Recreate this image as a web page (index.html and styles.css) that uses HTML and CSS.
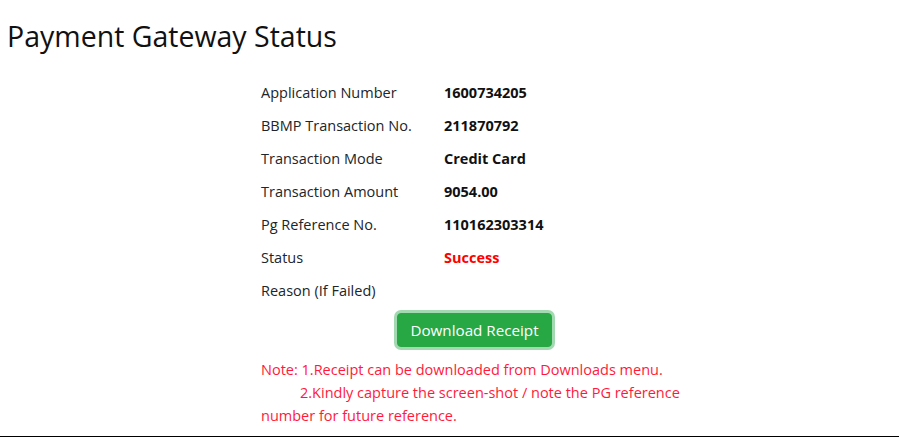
FILE: index.html
```html
<!DOCTYPE html>
<html>
<head>
<meta charset="utf-8">
<link rel="stylesheet" href="styles.css">
</head>
<body>
<div class="page">
  <h1 class="title">Payment Gateway Status</h1>
  <div class="panel">
    <div class="details">
      <div class="label">Application Number</div><div class="value">1600734205</div>
      <div class="label">BBMP Transaction No.</div><div class="value">211870792</div>
      <div class="label">Transaction Mode</div><div class="value">Credit Card</div>
      <div class="label">Transaction Amount</div><div class="value">9054.00</div>
      <div class="label">Pg Reference No.</div><div class="value">110162303314</div>
      <div class="label">Status</div><div class="value success">Success</div>
      <div class="label">Reason (If Failed)</div><div class="value"></div>
    </div>
    <div class="actions">
      <button class="btn-download">Download Receipt</button>
    </div>
    <p class="note">Note: 1.Receipt can be downloaded from Downloads menu.<br><span class="indent"></span>2.Kindly capture the screen-shot / note the PG reference number for future reference.</p>
  </div>
</div>
</body>
</html>
```
FILE: styles.css
```css
html, body {
  margin: 0;
  padding: 0;
  background: #fff;
}
body {
  font-family: "Open Sans", "Liberation Sans", sans-serif;
  color: #212529;
  font-size: 14.5px;
}
.page {
  width: 899px;
  height: 437px;
  box-sizing: border-box;
  border-bottom: 1px solid #000;
  overflow: hidden;
}
.title {
  margin: 0;
  padding: 19px 0 0 7px;
  font-size: 28.5px;
  font-weight: 400;
  line-height: 34px;
  color: #111;
}
.panel {
  margin: 23px 0 0 261px;
  width: 440px;
}
.details {
  display: grid;
  grid-template-columns: 183px 1fr;
  grid-auto-rows: 33px;
  align-items: center;
}
.label {
  color: #212529;
}
.value {
  font-weight: 700;
  color: #111;
}
.value.success {
  color: #ff0000;
}
.actions {
  display: flex;
  justify-content: center;
  margin-top: 6px;
  padding-right: 13px;
}
.btn-download {
  font-family: "Open Sans", "Liberation Sans", sans-serif;
  font-size: 15.2px;
  line-height: 20px;
  padding: 6px 12px;
  color: #fff;
  background: #28a745;
  border: 1px solid #28a745;
  border-radius: 4px;
  box-shadow: 0 0 0 3px rgba(72, 180, 97, 0.5);
  cursor: pointer;
}
.note {
  margin: 11px 0 0 0;
  color: #ff1a3c;
  line-height: 23px;
}
.indent {
  display: inline-block;
  width: 39px;
}
```
